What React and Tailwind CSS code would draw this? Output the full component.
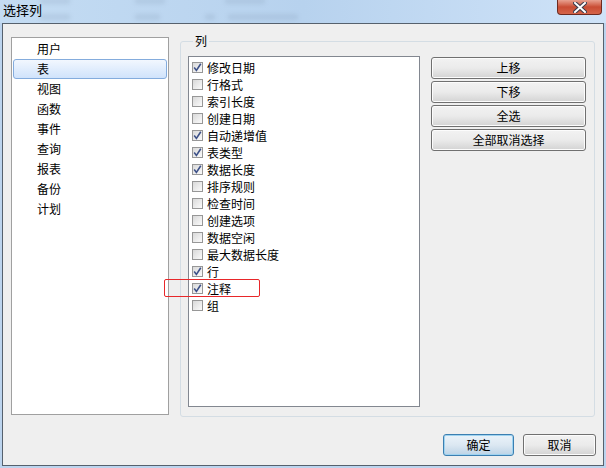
import React from 'react';

const FONT = { fontFamily: '"Noto Sans CJK SC", "Microsoft YaHei", sans-serif' };

const categories = ['用户', '表', '视图', '函数', '事件', '查询', '报表', '备份', '计划'];

const columns = [
    ['修改日期', true],
    ['行格式', false],
    ['索引长度', false],
    ['创建日期', false],
    ['自动递增值', true],
    ['表类型', true],
    ['数据长度', true],
    ['排序规则', false],
    ['检查时间', false],
    ['创建选项', false],
    ['数据空闲', false],
    ['最大数据长度', false],
    ['行', true],
    ['注释', true],
    ['组', false],
];

const Check = ({ checked }) => (
    <span className="w-[11px] h-[11px] border border-[#979797] bg-gradient-to-br from-[#d9d9d9] to-[#fbfbfb] flex items-center justify-center shrink-0">
        {checked && (
            <svg width="9" height="9" viewBox="0 0 9 9">
                <path d="M1.2 4.6 L3.4 7.4 L7.8 0.8" fill="none" stroke="#3d5188" strokeWidth="1.6" />
            </svg>
        )}
    </span>
);

const Btn = ({ children, className = '' }) => (
    <button className={`h-[22px] rounded-[3px] border border-[#707070] bg-gradient-to-b from-[#f2f2f2] via-[#ebebeb] to-[#d3d3d3] shadow-[inset_0_0_0_1px_#fcfcfc] text-[12px] text-black leading-none ${className}`}>
        {children}
    </button>
);

const App = () => {
    return (
        <div className="w-[606px] h-[468px] bg-[#bcd4ee] flex flex-col overflow-hidden" style={FONT}>
            {/* title bar */}
            <div className="h-[23px] relative bg-gradient-to-r from-[#c4dcf3] via-[#b7d2ee] to-[#cfe3f8] flex items-start shrink-0">
                <div className="absolute left-[40px] top-[-2px] w-[30px] h-[6px] bg-[#7d93ad] opacity-20 blur-[2px]" />
                <div className="absolute left-[135px] top-[-2px] w-[30px] h-[6px] bg-[#7d93ad] opacity-20 blur-[2px]" />
                <div className="absolute left-[225px] top-[-2px] w-[40px] h-[6px] bg-[#7d93ad] opacity-20 blur-[2px]" />
                <div className="absolute left-[40px] top-[14px] w-[30px] h-[6px] bg-[#7d93ad] opacity-20 blur-[2px]" />
                <div className="absolute left-[135px] top-[14px] w-[25px] h-[6px] bg-[#7d93ad] opacity-20 blur-[2px]" />
                <div className="absolute left-[205px] top-[14px] w-[10px] h-[6px] bg-[#7d93ad] opacity-20 blur-[2px]" />
                <div className="absolute left-[228px] top-[14px] w-[70px] h-[6px] bg-[#7d93ad] opacity-20 blur-[2px]" />
                <span className="relative ml-[3px] mt-[3px] text-[13px] leading-[14px] text-black">选择列</span>
                <div className="absolute left-[557px] top-0 w-[45px] h-[15px] rounded-b-[4px] border border-t-0 border-[#6d2a20] bg-gradient-to-b from-[#e8a190] via-[#c94c33] to-[#d5654a] flex items-center justify-center">
                    <svg width="14" height="11" viewBox="0 0 14 11">
                        <path d="M2 1 L12 10 M12 1 L2 10" stroke="#3a3a4a" strokeWidth="4" strokeLinecap="square" />
                        <path d="M2 1 L12 10 M12 1 L2 10" stroke="#ffffff" strokeWidth="2" strokeLinecap="square" />
                    </svg>
                </div>
            </div>

            {/* body */}
            <div className="mx-[2px] h-[443px] border border-[#56616d] bg-[#efefef] flex flex-col shrink-0">
                <div className="flex pt-[13px] pl-[8px] relative">
                    {/* left list */}
                    <div className="w-[158px] h-[378px] border border-[#a0a0a0] bg-white pt-[1px] flex flex-col">
                        {categories.map((c) => (
                            <div
                                key={c}
                                className={`h-[20px] mx-[1px] flex items-center pl-[23px] text-[12px] text-black ${c === '表' ? 'rounded-[3px] border border-[#84acdd] bg-gradient-to-b from-[#f2f7fe] to-[#d0e3fb]' : 'border border-transparent'}`}
                            >
                                {c}
                            </div>
                        ))}
                    </div>

                    {/* group */}
                    <fieldset className="ml-[11px] w-[415px] h-[382px] mt-[-2px] border border-[#d4dde4] rounded-[3px] pl-[7px] pr-[8px] pt-[9px] pb-[7px] flex">
                        <legend className="ml-[5px] px-[2px] text-[12px] leading-[12px] text-black">列</legend>
                        <div className="flex gap-[11px] w-full">
                            <div className="w-[232px] h-[351px] border border-[#828790] bg-white pt-[2px]">
                                {columns.map(([label, on]) => (
                                    <div key={label} className="h-[17px] flex items-center pl-[3px] gap-[4px] text-[12px] text-black">
                                        <Check checked={on} />
                                        <span>{label}</span>
                                    </div>
                                ))}
                            </div>
                            <div className="w-[155px] mt-[1px] flex flex-col gap-[2px]">
                                <Btn>上移</Btn>
                                <Btn>下移</Btn>
                                <Btn>全选</Btn>
                                <Btn>全部取消选择</Btn>
                            </div>
                        </div>
                    </fieldset>

                    {/* annotation */}
                    <div className="absolute left-[161px] top-[255px] w-[96px] h-[18px] border border-[#e8272a] rounded-[2px]" />
                </div>

                <div className="flex justify-end gap-[9px] pr-[7px] mt-[17px]">
                    <button className="w-[71px] h-[22px] rounded-[3px] border border-[#3c7fb1] bg-gradient-to-b from-[#eaf3fa] via-[#dce8f2] to-[#bcd3e6] shadow-[inset_0_0_0_1px_#9fd3f0] text-[12px] text-black leading-none">
                        确定
                    </button>
                    <Btn className="w-[73px]">取消</Btn>
                </div>
            </div>
        </div>
    );
};

export default App;
